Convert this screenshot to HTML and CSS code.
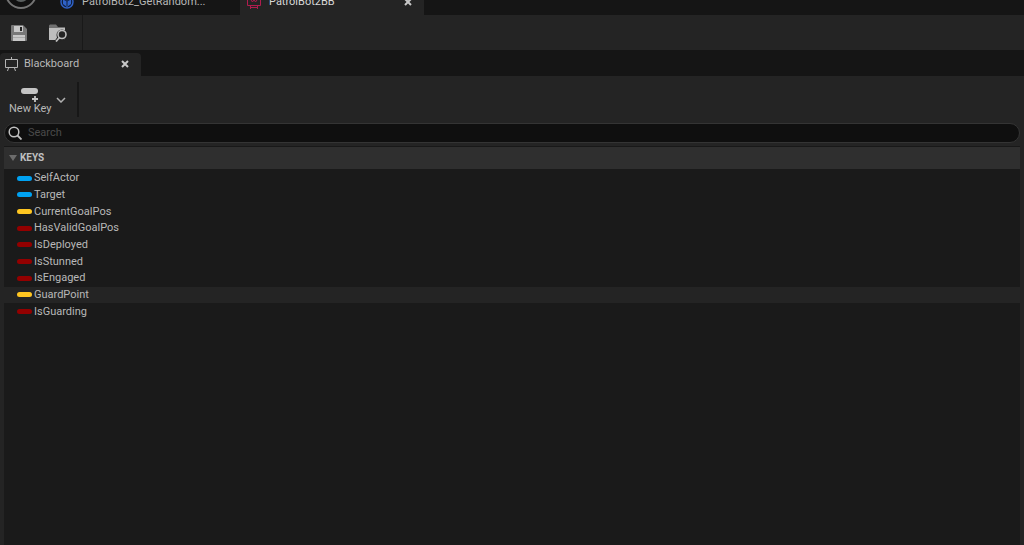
FILE: index.html
```html
<!DOCTYPE html>
<html lang="en">
<head>
<meta charset="UTF-8">
<meta name="viewport" content="width=device-width, initial-scale=1.0">
<title>PatrolBot2BB</title>
<link rel="stylesheet" href="styles.css">
</head>
<body>

<!-- Asset tabs -->
<header class="asset-bar">
    <svg class="logo" width="34" height="34" viewBox="0 0 34 34">
        <circle cx="17" cy="17" r="15" fill="#111" stroke="#747474" stroke-width="2"/>
        <path d="M11 10v12c0 2 3 4 6 4 4 0 7-3 8-6l-3 2V10l-4 3v10l-3-1V10z" fill="#5a5f5f"/>
    </svg>
    <div class="asset-tab">
        <svg width="14" height="14" viewBox="0 0 14 14">
            <circle cx="7" cy="7" r="6" fill="#10203f" stroke="#2f62c8" stroke-width="1.4"/>
            <path d="M3 4l4-2 4 2v5l-4 3-4-3z" fill="#2f62c8"/>
            <path d="M3 4l4 2 4-2M7 6v5" fill="none" stroke="#10203f"/>
        </svg>
        <span class="tab-label">PatrolBot2_GetRandom...</span>
    </div>
    <div class="asset-tab active">
        <svg width="14" height="14" viewBox="0 0 14 14" fill="none" stroke="#b01c4e">
            <path d="M.5 1.500h13v9H.5zM3.500 11v3M10.500 11v3M3 12.500h8M4 5l1.500 2L7 4.500 8.500 7 10 5"/>
        </svg>
        <span class="tab-label">PatrolBot2BB</span>
        <button class="close" type="button" aria-label="Close PatrolBot2BB">
            <svg width="8" height="8" viewBox="0 0 8 8"><path d="M1 1l6 6M7 1 1 7"/></svg>
        </button>
    </div>
</header>

<!-- Main toolbar -->
<div class="toolbar">
    <button class="tool" type="button" aria-label="Save">
        <svg width="16" height="16" viewBox="0 0 16 16">
            <path d="M1 0h11l4 4v11a1 1 0 0 1-1 1H1a1 1 0 0 1-1-1V1a1 1 0 0 1 1-1z" fill="#787878"/>
            <path d="M3 1h9v6H3zM2 10h12v6H2z" fill="#c8c8c8"/>
            <path d="M9 2h2v4H9z" fill="#242424"/>
            <path d="M2 12.500h12" stroke="#aaa"/>
        </svg>
    </button>
    <button class="tool" type="button" aria-label="Browse">
        <svg width="19" height="18" viewBox="0 0 19 18">
            <path d="M0 4V1.500L1 .5h6L9 3h7v2H0z" fill="#707070"/>
            <path d="M0 4h16v12H0z" fill="#bdbdbd"/>
            <circle cx="13" cy="11" r="5.500" fill="#242424"/>
            <path d="M5 18l4-6 4 3-2 3z" fill="#242424"/>
            <circle cx="13" cy="10.500" r="4" fill="#242424" stroke="#bdbdbd" stroke-width="1.600"/>
            <path d="M10.500 13.500l-3.500 4" stroke="#bdbdbd" stroke-width="1.800"/>
        </svg>
    </button>
</div>

<!-- Blackboard panel -->
<div class="panel-bar">
    <div class="panel-tab">
        <svg width="14" height="14" viewBox="0 0 14 14" fill="none" stroke="#b4b4b4">
            <path d="M.5 2.500h12v8H.5zM6.500 0v2M3.500 11l-1 3M9.500 11l1 3"/>
        </svg>
        <span class="tab-label">Blackboard</span>
        <button class="close" type="button" aria-label="Close Blackboard">
            <svg width="8" height="8" viewBox="0 0 8 8"><path d="M1 1l6 6M7 1 1 7"/></svg>
        </button>
    </div>
</div>

<main class="panel">
    <div class="key-tools">
        <button class="new-key" type="button">
            <svg width="18" height="15" viewBox="0 0 18 15">
                <rect x="0" y="1" width="17" height="6" rx="3" fill="#c4c4c4"/>
                <path d="M14 9v6M11 12h6" stroke="#c4c4c4" stroke-width="1.800"/>
            </svg>
            <span>New Key</span>
        </button>
        <button class="menu" type="button" aria-label="New key options">
            <svg width="10" height="6" viewBox="0 0 10 6"><path d="M1 1l4 4 4-4" fill="none" stroke="#b0b0b0" stroke-width="1.500"/></svg>
        </button>
    </div>

    <label class="search">
        <svg width="14" height="14" viewBox="0 0 14 14" fill="none" stroke="#c0c0c0">
            <circle cx="6" cy="6" r="4.800" stroke-width="1.500"/>
            <path d="M9.500 9.500l4 4" stroke-width="1.800"/>
        </svg>
        <input type="text" placeholder="Search" aria-label="Search">
    </label>

    <section class="keys">
        <h2 class="keys-title">
            <svg width="8" height="6" viewBox="0 0 8 6"><path d="M0 0h8L4 6z" fill="#6c6c6c"/></svg>
            KEYS
        </h2>
        <ul class="key-list">
            <li class="key object">SelfActor</li>
            <li class="key object">Target</li>
            <li class="key vector">CurrentGoalPos</li>
            <li class="key bool">HasValidGoalPos</li>
            <li class="key bool">IsDeployed</li>
            <li class="key bool">IsStunned</li>
            <li class="key bool">IsEngaged</li>
            <li class="key vector hover">GuardPoint</li>
            <li class="key bool">IsGuarding</li>
        </ul>
    </section>
</main>

</body>
</html>
```
FILE: styles.css
```css
* {
    box-sizing: border-box;
}
body {
    display: flex;
    flex-direction: column;
    min-height: 100vh;
    margin: 0;
    background-color: #242424;
    color: #b8b8b8;
    font-family: Roboto, "Liberation Sans", sans-serif;
    font-size: 11px;
    line-height: 14px;
}
svg {
    display: block;
    flex: none;
}
button {
    padding: 0;
    border: none;
    background: none;
    color: inherit;
    font: inherit;
}

/* Asset tabs, scrolled up under the window edge */
.asset-bar {
    display: flex;
    align-items: flex-end;
    height: 15px;
    overflow: hidden;
    background-color: #151515;
}
.logo {
    margin: 0 15px 5px 4px;
}
.asset-tab {
    display: flex;
    flex: none;
    align-items: center;
    width: 187px;
    height: 26px;
    padding: 0 12px 0 7px;
    gap: 8px;
}
.asset-tab.active {
    width: 184px;
    border-radius: 4px 4px 0 0;
    background-color: #242424;
    color: #d8d8d8;
}
.close {
    margin-left: auto;
}
.close path {
    stroke: #c8c8c8;
    stroke-width: 2;
}

/* Main toolbar */
.toolbar {
    display: flex;
    align-self: flex-start;
    align-items: center;
    height: 35px;
    padding: 0 14px 0 11px;
    gap: 22px;
    border-right: 1px solid #191919;
}

/* Panel tabs */
.panel-bar {
    height: 26px;
    padding-top: 3px;
    background-color: #151515;
}
.panel-tab {
    display: flex;
    align-items: center;
    width: 141px;
    height: 23px;
    padding: 0 12px 2px 5px;
    gap: 5px;
    border-radius: 4px 4px 0 0;
    background-color: #242424;
}

/* Blackboard panel */
.panel {
    display: flex;
    flex: 1;
    flex-direction: column;
    padding: 6px 4px 0;
}
.key-tools {
    display: flex;
    align-self: flex-start;
    align-items: center;
    height: 35px;
    padding: 0 11px 0 5px;
    gap: 5px;
    border-right: 2px solid #171717;
}
.new-key {
    display: flex;
    flex-direction: column;
    align-items: center;
    padding-top: 3px;
}
.search {
    display: flex;
    align-items: center;
    height: 20px;
    margin: 6px 0 3px;
    padding: 0 3px;
    gap: 6px;
    border: 1px solid #343434;
    border-radius: 10px;
    background-color: #0f0f0f;
}
.search input {
    flex: 1;
    min-width: 0;
    padding: 0;
    border: none;
    outline: none;
    background: none;
    color: #c0c0c0;
    font: inherit;
}
.search input::placeholder {
    color: #4a4a4a;
}

/* Key list */
.keys {
    flex: 1;
    border-top: 1px solid #181818;
    background-color: #1a1a1a;
}
.keys-title {
    display: flex;
    align-items: center;
    height: 22px;
    margin: 0 0 1px;
    padding-left: 5px;
    gap: 3px;
    background-color: #2f2f2f;
    color: #c0c0c0;
    font-size: 10px;
    font-weight: bold;
}
.key-list {
    display: grid;
    grid-auto-rows: 1fr;
    height: 150px;
    margin: 0;
    padding: 0;
    list-style: none;
}
.key {
    display: flex;
    align-items: center;
    padding-left: 13px;
    gap: 2px;
}
.key::before {
    content: "";
    width: 15px;
    height: 5px;
    border-radius: 3px;
}
.key.object::before {
    background-color: #00a2f2;
}
.key.vector::before {
    background-color: #ffc621;
}
.key.bool::before {
    background-color: #930000;
}
.key.hover {
    background-color: #242424;
}
```
